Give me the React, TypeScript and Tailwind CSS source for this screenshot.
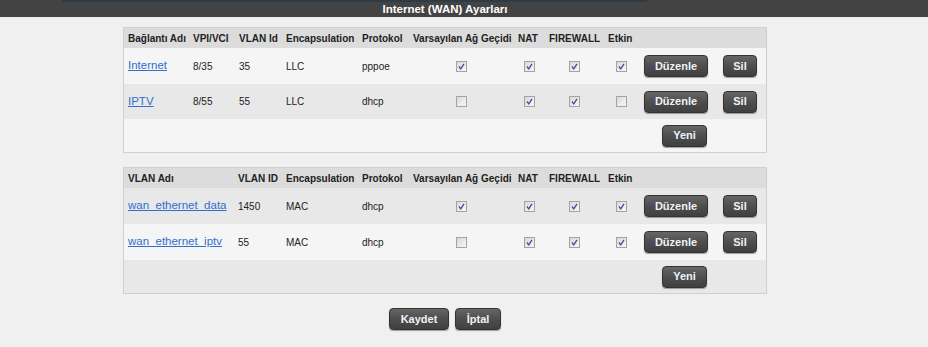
import React from 'react';

type Row1 = { name: string; vpi: string; vlan: string; enc: string; proto: string; gw: boolean; nat: boolean; fw: boolean; on: boolean };
type Row2 = { name: string; vlan: string; enc: string; proto: string; gw: boolean; nat: boolean; fw: boolean; on: boolean };

const WAN_ROWS: Row1[] = [
  { name: 'Internet', vpi: '8/35', vlan: '35', enc: 'LLC', proto: 'pppoe', gw: true, nat: true, fw: true, on: true },
  { name: 'IPTV', vpi: '8/55', vlan: '55', enc: 'LLC', proto: 'dhcp', gw: false, nat: true, fw: true, on: false },
];

const VLAN_ROWS: Row2[] = [
  { name: 'wan_ethernet_data', vlan: '1450', enc: 'MAC', proto: 'dhcp', gw: true, nat: true, fw: true, on: true },
  { name: 'wan_ethernet_iptv', vlan: '55', enc: 'MAC', proto: 'dhcp', gw: false, nat: true, fw: true, on: true },
];

const COLS1 = 'grid grid-cols-[65px_46px_47px_76px_51px_105px_31px_59px_34px_76px_52px]';
const COLS2 = 'grid grid-cols-[110px_48px_76px_51px_105px_31px_59px_34px_76px_52px]';

function Check({ checked }: { checked: boolean }) {
  return (
    <span className="flex items-center justify-center w-[11px] h-[11px] border border-[#a3a3a3] bg-gradient-to-br from-[#d9d9d9] to-[#f7f7f7]">
      {checked && (
        <svg width="9" height="9" viewBox="0 0 9 9">
          <path d="M2 4.5 L3.8 6.8 L7 1.8" fill="none" stroke="#3b4f9e" strokeWidth="1.3" />
        </svg>
      )}
    </span>
  );
}

function Btn({ label, w }: { label: string; w: string }) {
  return (
    <button
      className={`${w} h-[22px] rounded-[4px] border border-[#333] bg-gradient-to-b from-[#666] via-[#4e4e4e] to-[#404040] text-[11px] font-bold text-[#eef2f6] shadow-[0_1px_1px_rgba(0,0,0,0.35)]`}
    >
      {label}
    </button>
  );
}

const th = 'pl-[4px] flex items-center text-[10px] font-bold text-[#222] whitespace-nowrap';
const td = 'pl-[4px] flex items-center text-[10px] text-[#222] whitespace-nowrap';
const link = 'pl-[4px] flex items-center text-[11.5px] text-[#2f6fcf] underline whitespace-nowrap';
const mid = 'flex items-center justify-center';

function Actions() {
  return (
    <>
      <div className={mid}><Btn label="Düzenle" w="w-[64px]" /></div>
      <div className={mid}><Btn label="Sil" w="w-[34px]" /></div>
    </>
  );
}

export default function App() {
  return (
    <div className="min-h-screen bg-[#f0f0f0] font-['Liberation_Sans',Arial,sans-serif]">
      <div className="h-[17px] bg-[#434343]">
        <div className="ml-[62px] w-[585px] h-[2px] bg-[#2e3a44]" />
        <div className="ml-[123px] w-[644px] text-center text-[11.5px] leading-[15px] font-bold text-white">
          Internet (WAN) Ayarları
        </div>
      </div>

      <div className="ml-[123px] w-[644px]">
        <div className="mt-[10px] border border-[#cfcfcf]">
          <div className={`${COLS1} h-[20px] bg-[#dcdcdc]`}>
            <div className={th}>Bağlantı Adı</div>
            <div className={th}>VPI/VCI</div>
            <div className={th}>VLAN Id</div>
            <div className={th}>Encapsulation</div>
            <div className={th}>Protokol</div>
            <div className={th}>Varsayılan Ağ Geçidi</div>
            <div className={th}>NAT</div>
            <div className={th}>FIREWALL</div>
            <div className={th}>Etkin</div>
            <div />
            <div />
          </div>
          {WAN_ROWS.map((r, i) => (
            <div key={r.name} className={`${COLS1} ${i === 0 ? 'h-[36px] bg-[#f5f5f5]' : 'h-[35px] bg-[#e8e8e8]'}`}>
              <a className={link} href="#">{r.name}</a>
              <div className={td}>{r.vpi}</div>
              <div className={td}>{r.vlan}</div>
              <div className={td}>{r.enc}</div>
              <div className={td}>{r.proto}</div>
              <div className={mid}><Check checked={r.gw} /></div>
              <div className={mid}><Check checked={r.nat} /></div>
              <div className={mid}><Check checked={r.fw} /></div>
              <div className={mid}><Check checked={r.on} /></div>
              <Actions />
            </div>
          ))}
          <div className={`${COLS1} h-[33px] bg-[#f5f5f5]`}>
            <div className="col-start-10 flex items-center justify-end pr-[7px]">
              <Btn label="Yeni" w="w-[45px]" />
            </div>
          </div>
        </div>

        <div className="mt-[14px] border border-[#cfcfcf]">
          <div className={`${COLS2} h-[20px] bg-[#dcdcdc]`}>
            <div className={th}>VLAN Adı</div>
            <div className={th}>VLAN ID</div>
            <div className={th}>Encapsulation</div>
            <div className={th}>Protokol</div>
            <div className={th}>Varsayılan Ağ Geçidi</div>
            <div className={th}>NAT</div>
            <div className={th}>FIREWALL</div>
            <div className={th}>Etkin</div>
            <div />
            <div />
          </div>
          {VLAN_ROWS.map((r, i) => (
            <div key={r.name} className={`${COLS2} h-[36px] ${i === 0 ? 'bg-[#e8e8e8]' : 'bg-[#f5f5f5]'}`}>
              <a className={link} href="#">{r.name}</a>
              <div className={td}>{r.vlan}</div>
              <div className={td}>{r.enc}</div>
              <div className={td}>{r.proto}</div>
              <div className={mid}><Check checked={r.gw} /></div>
              <div className={mid}><Check checked={r.nat} /></div>
              <div className={mid}><Check checked={r.fw} /></div>
              <div className={mid}><Check checked={r.on} /></div>
              <Actions />
            </div>
          ))}
          <div className={`${COLS2} h-[33px] bg-[#e8e8e8]`}>
            <div className="col-start-9 flex items-center justify-end pr-[7px]">
              <Btn label="Yeni" w="w-[45px]" />
            </div>
          </div>
        </div>

        <div className="mt-[14px] flex justify-center gap-[6px]">
          <Btn label="Kaydet" w="w-[60px]" />
          <Btn label="İptal" w="w-[46px]" />
        </div>
      </div>
    </div>
  );
}
